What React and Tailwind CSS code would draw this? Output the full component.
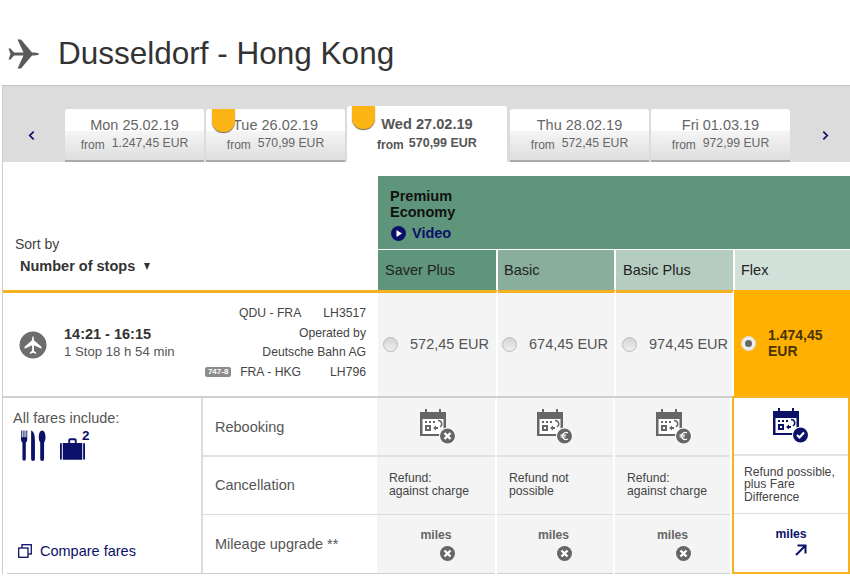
const font = { fontFamily: '"Liberation Sans", Arial, sans-serif' };

const planePath =
  "M31.5 15C30 13.6 27 13.4 24 13.4L13 .5H9.5L15.5 13.4H6L2.5 9.5H.5L2.5 15L.5 20.5H2.5L6 16.6H15.5L9.5 29.5H13L24 16.6C27 16.6 30 16.4 31.5 15Z";

function Tab({ date, price, active, badge }) {
  if (active) {
    return (
      <div className="relative w-[160px] h-[56px] bg-white rounded-t-[3px] flex flex-col items-center text-[#555] pt-[10px]">
        {badge && <Badge className="left-[5px] top-0" />}
        <div className="text-[14.6px] leading-[17px] font-bold">{date}</div>
        <div className="flex items-end gap-[5px] mt-[3px] leading-[15px]">
          <span className="text-[12px] font-bold translate-y-[2px]">from</span>
          <span className="text-[12.5px] font-bold">{price}</span>
        </div>
      </div>
    );
  }
  return (
    <div className="relative w-[139px] h-[53px] rounded-t-[3px] border-b-2 border-[#a9a9a9] bg-[linear-gradient(to_bottom,#fff_44%,#f5f5f5_44%,#dedede_100%)] flex flex-col items-center text-[#666] pt-[8px]">
      {badge && <Badge className="left-[6px] top-0" />}
      <div className="text-[14.5px] leading-[17px]">{date}</div>
      <div className="flex items-end gap-[7px] mt-[2px] leading-[15px]">
        <span className="text-[12px] translate-y-[2px]">from</span>
        <span className="text-[12.2px]">{price}</span>
      </div>
    </div>
  );
}

function Badge({ className }) {
  return (
    <div
      className={`absolute w-[23px] h-[23px] bg-[#fdb515] rounded-b-[11px] shadow-[0_1px_1px_rgba(60,40,0,0.7)] ${className}`}
    />
  );
}

function Chevron({ dir }) {
  return (
    <svg width="7" height="11" viewBox="0 0 8 12" fill="none" stroke="#0b1168" strokeWidth="2">
      <path d={dir === "left" ? "M6.5 1.5L2 6l4.5 4.5" : "M1.5 1.5L6 6l-4.5 4.5"} />
    </svg>
  );
}

function Calendar({ color, badge }) {
  return (
    <svg width="36" height="36" viewBox="0 0 36 36">
      <path fill={color} d="M0 3H5V0H7V3H19V0H21V3H26V27H0Z" />
      <rect x="2.5" y="10" width="21" height="15" fill="white" />
      <g fill={color}>
        <rect x="5" y="12" width="2" height="2" />
        <rect x="9" y="12" width="2" height="2" />
        <rect x="13" y="12" width="2" height="2" />
        <path d="M5 16H11V22H5ZM7 18V20H9V18Z" fillRule="evenodd" />
        <path d="M13 19L16 16.500V18H18V20H16V21.500Z" />
      </g>
      <path d="M18 11.500C22 11.500 23 16 20 18" fill="none" stroke={color} strokeWidth="1.500" />
      <circle cx="27.500" cy="27" r="8.500" fill="white" />
      <circle cx="27.500" cy="27" r="7.500" fill={color} />
      {badge === "x" && (
        <path d="M24.500 24L30.500 30M30.500 24L24.500 30" stroke="white" strokeWidth="2.400" />
      )}
      {badge === "euro" && (
        <path d="M31 23.900A3.600 3.600 0 1 0 31 30.100M23.500 26.100H29M23.500 28H28.500" fill="none" stroke="white" strokeWidth="1.200" />
      )}
      {badge === "check" && (
        <path d="M24 27L26.500 29.500L31 24.500" fill="none" stroke="white" strokeWidth="2.200" />
      )}
    </svg>
  );
}

function XCircle() {
  return (
    <svg width="15" height="15" viewBox="0 0 15 15">
      <circle cx="7.500" cy="7.500" r="7.500" fill="#666" />
      <path d="M4.500 4.500L10.500 10.500M10.500 4.500L4.500 10.500" stroke="white" strokeWidth="2.400" />
    </svg>
  );
}

function FareColumn({ width, icon, iconPad, milesPad, refund }) {
  return (
    <div className={`${width} border-r-2 border-white shrink-0`}>
      <div className={`h-[59px] bg-[#f4f4f4] border-b-2 border-[#e2e2e2] flex justify-center items-start pt-[11px] ${iconPad}`}>
        <Calendar color="#666" badge={icon} />
      </div>
      <div className="h-[58px] bg-[#f4f4f4] border-b border-[#dcdcdc] flex items-center pl-[12px] pb-[2px] text-[12.2px] leading-[13px] text-[#444]">
        <div>{refund}</div>
      </div>
      <div className={`h-[59px] bg-[#f4f4f4] border-b border-[#cfcfcf] flex flex-col items-center pt-[14px] ${milesPad}`}>
        <div className="text-[12.2px] leading-[13px] font-bold text-[#666]">miles</div>
        <div className="ml-[22px] mt-[4px]">
          <XCircle />
        </div>
      </div>
    </div>
  );
}

function PriceCell({ width, pad, price }) {
  return (
    <div className={`${width} ${pad} border-t-[3px] border-r-2 border-t-[#f5b11f] border-r-white bg-[#f4f4f4] flex items-center shrink-0`}>
      <div className="w-[15px] h-[15px] rounded-full border border-[#bbb] bg-linear-to-b from-[#d4d4d4] to-[#efefef] shrink-0" />
      <div className="ml-[12px] text-[14.5px] text-[#555] whitespace-nowrap">{price}</div>
    </div>
  );
}

export default function App() {
  return (
    <div style={font} className="w-[850px] h-[585px] overflow-hidden bg-white text-[#333]">
      <div className="h-[85px] flex items-center pl-[8px] pt-[21px]">
        <svg width="32" height="30" viewBox="0 0 32 30" className="mt-[1px]">
          <path fill="#5a5a5a" d={planePath} />
        </svg>
        <h1 className="ml-[18px] text-[31.5px] leading-[36px] text-[#333]">Dusseldorf - Hong Kong</h1>
      </div>

      <div className="ml-[2px] border-l border-[#ccc]">
        <div className="h-[77px] bg-[#dcdcdc] border-t border-[#c4c4c4] flex items-end">
          <div className="w-[62px] h-[53px] flex items-center justify-center pr-[6px]">
            <Chevron dir="left" />
          </div>
          <div className="flex items-end gap-[2px]">
            <Tab date="Mon 25.02.19" price="1.247,45 EUR" />
            <Tab date="Tue 26.02.19" price="570,99 EUR" badge />
            <Tab date="Wed 27.02.19" price="570,99 EUR" active badge />
            <div className="ml-[1px] flex gap-[2px]">
              <Tab date="Thu 28.02.19" price="572,45 EUR" />
              <Tab date="Fri 01.03.19" price="972,99 EUR" />
            </div>
          </div>
          <div className="w-[58px] h-[53px] flex items-center justify-center pl-[12px]">
            <Chevron dir="right" />
          </div>
        </div>

        <div className="flex h-[128px]">
          <div className="w-[375px] flex flex-col justify-end pb-[15px] pl-[12px]">
            <div className="text-[14px] leading-[17px] text-[#444] translate-y-[1px]">Sort by</div>
            <div className="ml-[5px] mt-[5px] flex items-center text-[14.5px] leading-[18px] font-bold text-[#333]">
              Number of stops
              <span className="ml-[9px] w-0 h-0 border-x-[3.5px] border-t-[7px] border-x-transparent border-t-[#333]" />
            </div>
          </div>
          <div className="flex-1 pt-[14px]">
            <div className="h-[73px] bg-[#5f957b] pl-[11px] pt-[12px] border-l border-[#5f957b]">
              <div className="text-[14.5px] leading-[16px] font-bold text-[#111]">
                Premium
                <br />
                Economy
              </div>
              <div className="flex items-center mt-[5px] ml-[1px] text-[14.5px] leading-[16px] font-bold text-[#0b1168]">
                <svg width="15" height="15" viewBox="0 0 15 15">
                  <circle cx="7.500" cy="7.500" r="7.500" fill="#0b1168" />
                  <path d="M5.500 4L11 7.500L5.500 11Z" fill="white" />
                </svg>
                <span className="ml-[6px]">Video</span>
              </div>
            </div>
            <div className="flex mt-[1px] h-[40px] text-[14.5px] text-[#222] leading-[40px]">
              <div className="w-[120px] border-r-2 border-white bg-[#5f957b] pl-[7px]">Saver Plus</div>
              <div className="w-[118px] border-r-2 border-white bg-[#8aae9c] pl-[6px]">Basic</div>
              <div className="w-[119px] border-r-2 border-white bg-[#b5ccc1] pl-[7px]">Basic Plus</div>
              <div className="flex-1 bg-[#d2e0da] pl-[6px]">Flex</div>
            </div>
          </div>
        </div>

        <div className="flex h-[106px]">
          <div className="w-[375px] border-t-[3px] border-[#f5b11f] flex justify-between pr-[12px] shrink-0">
            <div className="flex items-center pl-[16px] -translate-y-[2px]">
              <svg width="28" height="28" viewBox="0 0 28 28" className="translate-y-[2px]">
                <circle cx="14" cy="14" r="13.500" fill="#6d6d6d" />
                <g transform="translate(14 14) rotate(-90) scale(.58) translate(-16 -15)">
                  <path fill="white" d={planePath} />
                </g>
              </svg>
              <div className="ml-[17px]">
                <div className="text-[14.500px] leading-[18px] font-bold text-[#333]">14:21 - 16:15</div>
                <div className="text-[13.200px] leading-[18px] text-[#555]">1 Stop 18 h 54 min</div>
              </div>
            </div>
            <div className="pt-[11px] leading-[19.500px] text-[#444] text-right text-[12.200px]">
              <div className="flex justify-end">
                <span>QDU - FRA</span>
                <span className="ml-[22px]">LH3517</span>
              </div>
              <div>Operated by</div>
              <div>Deutsche Bahn AG</div>
              <div className="flex justify-end items-center">
                <span className="w-[26px] h-[10px] rounded-[2px] bg-[#8c8c8c] text-white text-[8px] leading-[10px] font-bold text-center mr-[9px]">747-8</span>
                <span>FRA - HKG</span>
                <span className="ml-[29px]">LH796</span>
              </div>
            </div>
          </div>
          <PriceCell width="w-[120px]" pad="pl-[5px]" price="572,45 EUR" />
          <PriceCell width="w-[118px]" pad="pl-[4px]" price="674,45 EUR" />
          <PriceCell width="w-[118px]" pad="pl-[6px]" price="974,45 EUR" />
          <div className="flex-1 bg-[#ffb000] flex items-center pl-[7px]">
            <div className="w-[15px] h-[15px] rounded-full border border-[#ddd] bg-[#eee] flex items-center justify-center shrink-0">
              <div className="w-[7px] h-[7px] rounded-full bg-[#666]" />
            </div>
            <div className="ml-[12px] text-[14px] leading-[16px] font-bold text-[#4a3500]">
              1.474,45
              <br />
              EUR
            </div>
          </div>
        </div>

        <div className="flex">
          <div className="flex border-t-2 border-[#cfcfcf] shrink-0">
            <div className="w-[196px] ml-[4px] h-[176px] border-r-2 border-b border-r-[#dcdcdc] border-b-[#cfcfcf] flex flex-col justify-between shrink-0 pb-[14px]">
              <div className="pl-[6px] pt-[12px]">
                <div className="text-[14.5px] leading-[17px] text-[#555]">All fares include:</div>
                <div className="flex items-start mt-[3px] ml-[8px]">
                  <svg width="25" height="31" viewBox="0 0 26 31" fill="#0b1168">
                    <path d="M0 0H.8V7H1.800V0H2.700V7H3.700V0H4.600V7H5.600V0H6.500V9C6.500 11 5.500 12 5 12.500V29.500A1.700 1.700 0 0 1 1.500 29.500V12.500C1 12 0 11 0 9Z" />
                    <path d="M10.500 0C13.500 1 14.500 5 14.500 12V29.500A2 2 0 0 1 10.500 29.500Z" />
                    <path d="M22 0C24.500 0 25.500 4 25.500 7C25.500 10 24.500 12 24 12.500V29.500A2 2 0 0 1 20 29.500V12.500C19.500 12 18.500 10 18.500 7C18.500 4 19.500 0 22 0Z" />
                  </svg>
                  <svg width="25" height="22" viewBox="0 0 27 23" fill="#0b1168" className="ml-[14px] mt-[8px]">
                    <path d="M9 5V2C9 .8 10 0 11 0H16C17 0 18 .8 18 2V5H24V23H3V5ZM11 5H16V2H11Z" fillRule="evenodd" />
                    <rect x="0" y="5" width="2" height="18" rx="1" />
                    <rect x="25" y="5" width="2" height="18" rx="1" />
                  </svg>
                  <span className="-ml-[3px] -mt-[2px] text-[13.500px] leading-[16px] font-bold text-[#0b1168]">2</span>
                </div>
              </div>
              <div className="flex items-center pl-[11px] text-[14.5px] leading-[16px] text-[#0b1168]">
                <svg width="14" height="14" viewBox="0 0 14 14" fill="none" stroke="#0b1168" strokeWidth="1.300">
                  <rect x="4" y=".7" width="9.300" height="9.300" />
                  <rect x=".7" y="4" width="9.300" height="9.300" fill="white" />
                </svg>
                <span className="ml-[8px]">Compare fares</span>
              </div>
            </div>
            <div className="w-[174px] shrink-0 text-[14.5px] text-[#555]">
              <div className="h-[59px] border-b-2 border-[#e2e2e2] pl-[12px] pt-[21px] leading-[17px]">Rebooking</div>
              <div className="h-[58px] border-b border-[#dcdcdc] pl-[12px] pt-[20px] leading-[17px]">Cancellation</div>
              <div className="h-[59px] border-b border-[#cfcfcf] pl-[12px] pt-[21px] leading-[17px]">Mileage upgrade **</div>
            </div>
            <FareColumn
              width="w-[120px]"
              icon="x"
              iconPad="pl-[4px]"
              milesPad=""
              refund={<>Refund:<br />against charge</>}
            />
            <FareColumn
              width="w-[118px]"
              icon="euro"
              iconPad="pl-0"
              milesPad="pr-[3px]"
              refund={<>Refund not<br />possible</>}
            />
            <FareColumn
              width="w-[117px]"
              icon="euro"
              iconPad="pl-[2px]"
              milesPad=""
              refund={<>Refund:<br />against charge</>}
            />
          </div>
          <div className="flex-1 h-[178px] border-2 border-[#f5b11f]">
            <div className="h-[58px] border-b-2 border-[#e2e2e2] flex justify-center pt-[10px]">
              <Calendar color="#0b1168" badge="check" />
            </div>
            <div className="h-[58px] border-b border-[#dcdcdc] flex items-center pl-[10px] text-[12.200px] leading-[12.500px] text-[#444]">
              <div>Refund possible,<br />plus Fare<br />Difference</div>
            </div>
            <div className="flex flex-col items-center pt-[14px]">
              <div className="text-[12.200px] leading-[13px] font-bold text-[#0b1168]">miles</div>
              <svg width="12" height="12" viewBox="0 0 12 12" fill="none" stroke="#0b1168" strokeWidth="2" className="ml-[20px] mt-[3px]">
                <path d="M1 11L10.500 1.500M2.500 1.500H10.500V9.500" />
              </svg>
            </div>
          </div>
        </div>
      </div>
    </div>
  );
}
